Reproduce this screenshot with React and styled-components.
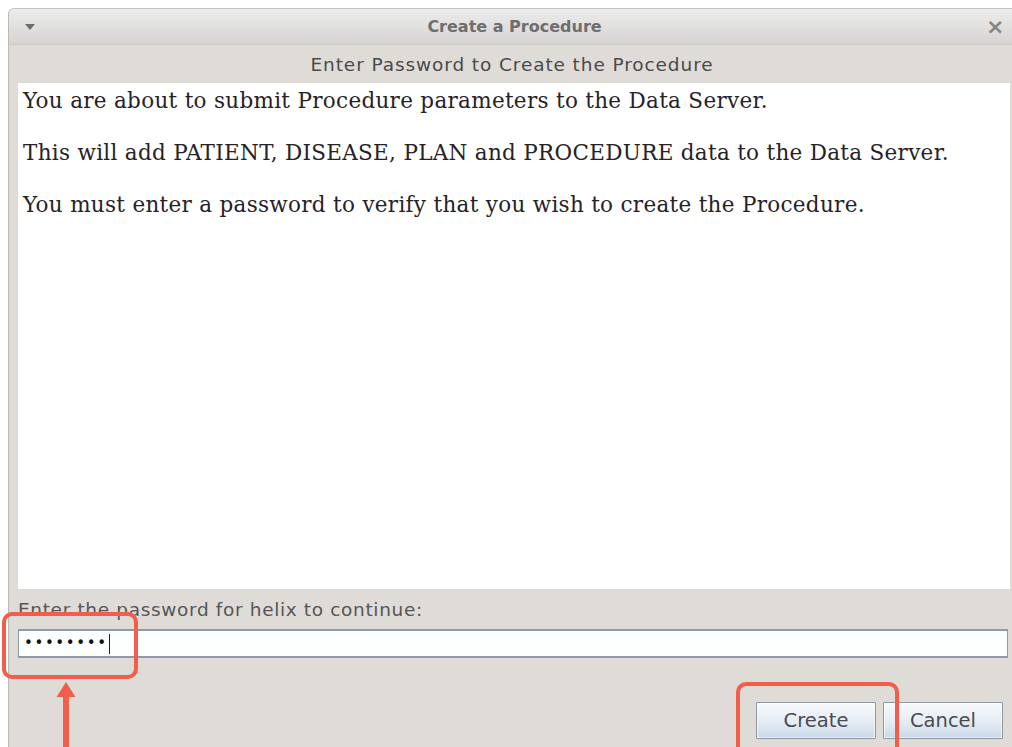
import React from "react";
import styled, { createGlobalStyle } from "styled-components";

const GlobalStyle = createGlobalStyle`
  html, body {
    margin: 0;
    padding: 0;
    background: #ffffff;
    overflow: hidden;
  }
  #root {
    width: 1012px;
    height: 747px;
    overflow: hidden;
  }
`;

const Page = styled.div`
  position: relative;
  width: 1012px;
  height: 747px;
  padding: 8px 0 0 8px;
  box-sizing: border-box;
  overflow: hidden;
  font-family: "DejaVu Sans", "Liberation Sans", sans-serif;
`;

const Window = styled.div`
  width: 1012px;
  height: 760px;
  background: #dfdcd8;
  border-top: 1px solid #c4c4c4;
  border-left: 1px solid #bdbab6;
  border-top-left-radius: 6px;
  box-sizing: border-box;
  display: flex;
  flex-direction: column;
`;

const TitleBar = styled.div`
  height: 35px;
  flex: none;
  display: flex;
  align-items: center;
  padding: 0 16px 0 16px;
  background: linear-gradient(#ececeb, #d5d4d2);
  border-bottom: 1px solid #cfccc8;
  border-top-left-radius: 5px;
`;

const MenuArrow = styled.div`
  width: 0;
  height: 0;
  border-left: 5px solid transparent;
  border-right: 5px solid transparent;
  border-top: 6px solid #6c6c6c;
  margin-top: 1px;
`;

const Title = styled.div`
  flex: 1;
  text-align: center;
  font-weight: bold;
  font-size: 16px;
  color: #6e6e6e;
  padding-left: 8px;
`;

const CloseIcon = styled.div`
  font-size: 22px;
  font-weight: bold;
  color: #858585;
  line-height: 1;
  width: 18px;
  text-align: center;
`;

const Body = styled.div`
  flex: 1;
  display: flex;
  flex-direction: column;
  padding: 0 0 0 9px;
`;

const Subtitle = styled.div`
  height: 38px;
  flex: none;
  display: flex;
  align-items: center;
  justify-content: center;
  font-size: 18.5px;
  letter-spacing: 0.9px;
  color: #4a4a4a;
  padding-right: 14px;
`;

const MessageArea = styled.div`
  height: 506px;
  flex: none;
  background: #ffffff;
  margin-right: 10px;
  padding: 5px 5px 0 5px;
  box-sizing: border-box;
  font-family: "DejaVu Serif", "Liberation Serif", serif;
  font-size: 21.5px;
  letter-spacing: 0.3px;
  color: #262228;
`;

const Paragraph = styled.p`
  margin: 0 0 26px;
  line-height: 26px;
  white-space: nowrap;
`;

const FieldLabel = styled.div`
  height: 40px;
  flex: none;
  display: flex;
  align-items: center;
  font-size: 18.5px;
  letter-spacing: 0.65px;
  color: #565656;
  padding-top: 1px;
  box-sizing: border-box;
`;

const PasswordField = styled.div`
  height: 29px;
  flex: none;
  margin-right: 12px;
  background: #fdfefe;
  border: 1px solid #8e9aa6;
  border-top-width: 2px;
  border-bottom-width: 2px;
  box-sizing: border-box;
  display: flex;
  align-items: center;
  padding-left: 5px;
`;

const Dots = styled.span`
  font-size: 15px;
  letter-spacing: 1.6px;
  color: #111;
  line-height: 1;
`;

const Caret = styled.span`
  width: 1px;
  height: 20px;
  background: #222;
  margin-left: 1px;
`;

const ButtonRow = styled.div`
  display: flex;
  justify-content: flex-end;
  gap: 7px;
  padding: 44px 17px 0 0;
`;

const Button = styled.button`
  width: 120px;
  height: 37px;
  font-family: "DejaVu Sans", "Liberation Sans", sans-serif;
  font-size: 19.5px;
  color: #4a4a52;
  border: 1px solid #8f989f;
  border-radius: 1px;
  background: linear-gradient(#f7f9fb, #e4ecf4 55%, #c8d8e8);
  box-shadow: inset 0 0 0 1px rgba(255, 255, 255, 0.6);
  padding: 0;
`;

const Highlight = styled.div`
  position: absolute;
  border: 4px solid #f35d4c;
  border-radius: 10px;
  box-sizing: border-box;
`;

const PointerArrow = styled.svg`
  position: absolute;
  left: 55px;
  top: 682px;
`;

export default function App() {
  return (
    <>
      <GlobalStyle />
      <Page>
        <Window>
          <TitleBar>
            <MenuArrow />
            <Title>Create a Procedure</Title>
            <CloseIcon>×</CloseIcon>
          </TitleBar>
          <Body>
            <Subtitle>Enter Password to Create the Procedure</Subtitle>
            <MessageArea>
              <Paragraph>
                You are about to submit Procedure parameters to the Data Server.
              </Paragraph>
              <Paragraph>
                This will add PATIENT, DISEASE, PLAN and PROCEDURE data to the
                Data Server.
              </Paragraph>
              <Paragraph>
                You must enter a password to verify that you wish to create the
                Procedure.
              </Paragraph>
            </MessageArea>
            <FieldLabel>Enter the password for helix to continue:</FieldLabel>
            <PasswordField>
              <Dots>••••••••</Dots>
              <Caret />
            </PasswordField>
            <ButtonRow>
              <Button>Create</Button>
              <Button>Cancel</Button>
            </ButtonRow>
          </Body>
        </Window>

        <Highlight style={{ left: 2, top: 612, width: 136, height: 67 }} />
        <Highlight style={{ left: 736, top: 682, width: 163, height: 80 }} />
        <PointerArrow width="22" height="70" viewBox="0 0 22 70">
          <polygon points="11,0 20.5,15 1.5,15" fill="#f35d4c" />
          <rect x="8" y="14" width="6" height="56" fill="#f35d4c" />
        </PointerArrow>
      </Page>
    </>
  );
}
